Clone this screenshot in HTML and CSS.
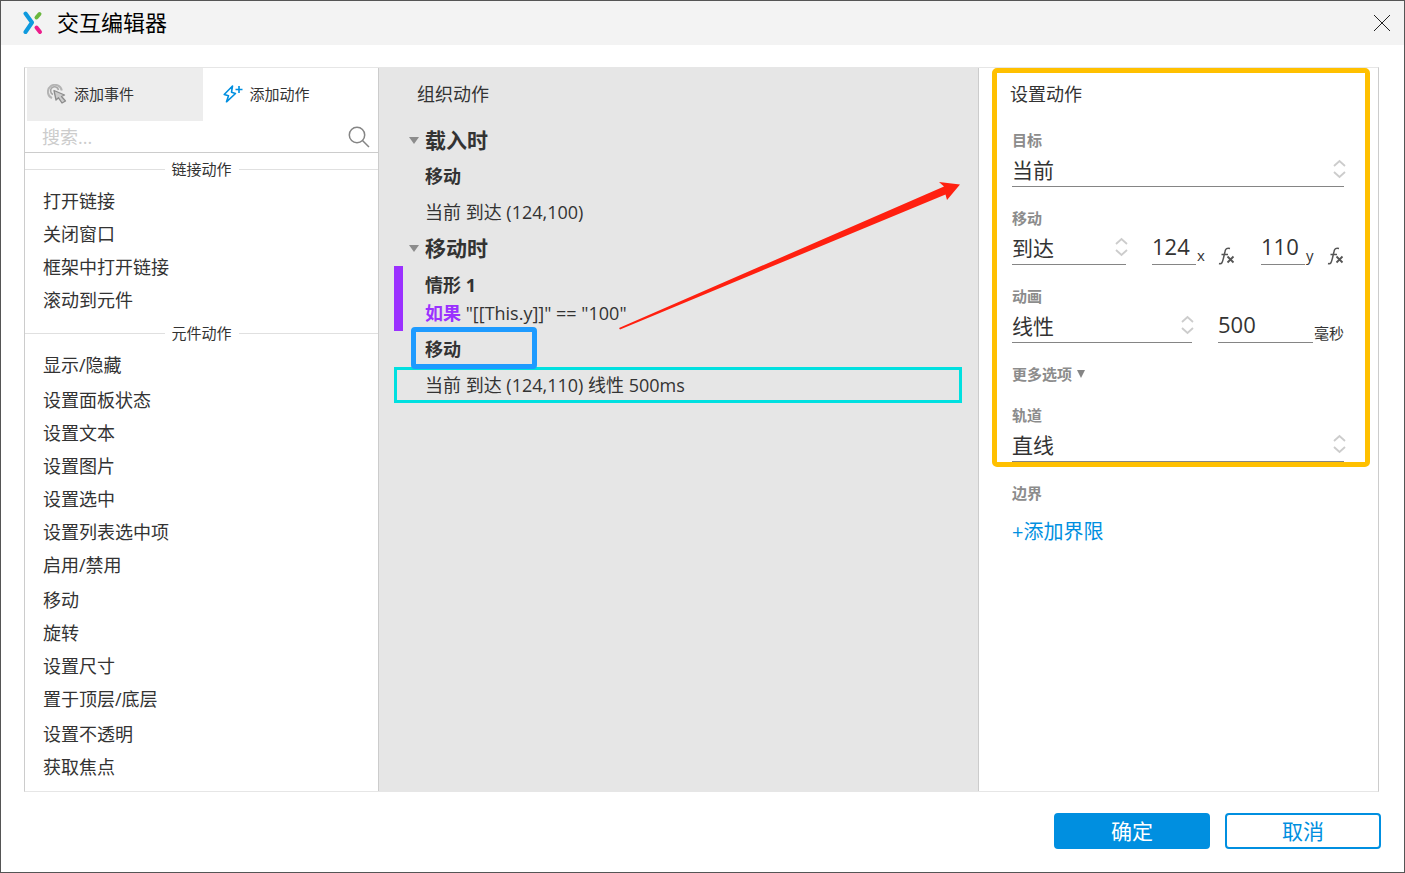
FILE: index.html
```html
<!DOCTYPE html>
<html lang="zh-CN">
<head>
<meta charset="utf-8">
<title>交互编辑器</title>
<link rel="stylesheet" href="styles.css">
</head>
<body>
<div class="window">
  <header class="titlebar">
    <svg class="logo" width="20" height="24" viewBox="0 0 20 24" fill="none" stroke-width="4">
      <path d="M13.500 6.500L16.500 3" stroke="#6ab73e" stroke-linecap="round"/>
      <path d="M13.500 16.500L17 21" stroke="#ec1e8c" stroke-linecap="round"/>
      <path d="M2.500 2.500L9 11.500L2.500 21" stroke="#0f9ade" stroke-linejoin="round" stroke-linecap="round"/>
    </svg>
    <h1 class="title">交互编辑器</h1>
    <button class="close" type="button" aria-label="关闭">
      <svg width="18" height="18" viewBox="0 0 18 18" stroke="#222" stroke-width="1"><path d="M1 1L17 17M17 1L1 17"/></svg>
    </button>
  </header>

  <main class="workspace">
    <section class="panel library">
      <div class="tabs">
        <button class="tab" type="button">
          <svg width="20" height="20" viewBox="0 0 20 20" fill="none" stroke="#a6a6a6">
            <path d="M5 14.200A7 7 0 1 1 14.800 6.500" stroke="#b4b4b4" stroke-width="2"/>
            <path d="M6 10.500A4 4 0 1 1 11.500 6" stroke-width="1.600"/>
            <path d="M7 6.500L9 16L11.500 13.800L15 19L18.500 17L14.500 12.500L17.500 11Z" fill="#ccc" stroke="#8c8c8c" stroke-width="1.300" stroke-linejoin="round"/>
          </svg>
          添加事件
        </button>
        <button class="tab tab-active" type="button">
          <svg width="20" height="18" viewBox="0 0 20 18" fill="none" stroke="#008fe0" stroke-width="1.600" stroke-linejoin="round">
            <path d="M9.500 1L1.200 9.500L5.500 10.800L3.500 16.800L12.500 8.500L8.500 7.200Z"/>
            <path d="M16 1V8M12.500 4.500H19.500"/>
          </svg>
          添加动作
        </button>
      </div>
      <div class="search">
        <input class="search-input" type="text" placeholder="搜索..." aria-label="搜索">
        <svg width="22" height="22" viewBox="0 0 22 22" fill="none" stroke="#858585" stroke-width="1.500"><circle cx="9" cy="9" r="7.700"/><path d="M14.500 14.500L21 21"/></svg>
      </div>
      <div class="catalog">
        <h2 class="group">链接动作</h2>
        <ul class="items">
          <li>打开链接</li>
          <li>关闭窗口</li>
          <li>框架中打开链接</li>
          <li>滚动到元件</li>
        </ul>
        <h2 class="group">元件动作</h2>
        <ul class="items">
          <li class="mixed">显示/隐藏</li>
          <li>设置面板状态</li>
          <li>设置文本</li>
          <li>设置图片</li>
          <li>设置选中</li>
          <li>设置列表选中项</li>
          <li class="mixed">启用/禁用</li>
          <li>移动</li>
          <li>旋转</li>
          <li>设置尺寸</li>
          <li class="mixed">置于顶层/底层</li>
          <li>设置不透明</li>
          <li>获取焦点</li>
          <li class="mixed">展开/折叠树节点</li>
        </ul>
      </div>
    </section>

    <section class="panel organizer">
      <h2 class="panel-title">组织动作</h2>
      <h3 class="event">载入时</h3>
      <p class="action">移动</p>
      <p class="detail">当前 到达 (124,100)</p>
      <h3 class="event">移动时</h3>
      <div class="case">
        <p><strong>情形 1</strong></p>
        <p><strong class="keyword">如果</strong> "[[This.y]]" == "100"</p>
      </div>
      <p class="action action-marked">移动</p>
      <p class="detail detail-selected">当前 到达 (124,110) 线性 500ms</p>
      <svg class="arrow" width="344" height="152" viewBox="0 0 344 152" fill="#ff2010">
        <path d="M1 150L326 8.500L321 4L342 6.500L329 22L327.500 16.500L2 151.500Z"/>
      </svg>
    </section>

    <section class="panel settings">
      <h2 class="panel-title">设置动作</h2>
      <form class="fields">
        <div class="field">
          <label for="target">目标</label>
          <div class="row">
            <div class="picker">
              <select id="target"><option>当前</option></select>
              <svg class="chevrons" width="13" height="20" viewBox="0 0 13 20" fill="none" stroke="#ccc" stroke-width="1.800"><path d="M1 7L6.500 2L12 7M1 13L6.500 18L12 13"/></svg>
            </div>
          </div>
        </div>
        <div class="field">
          <label for="move">移动</label>
          <div class="row">
            <div class="picker">
              <select id="move"><option>到达</option></select>
              <svg class="chevrons" width="13" height="20" viewBox="0 0 13 20" fill="none" stroke="#ccc" stroke-width="1.800"><path d="M1 7L6.500 2L12 7M1 13L6.500 18L12 13"/></svg>
            </div>
            <div class="coord">
              <input class="number" id="pos-x" type="text" value="124">
              <label class="unit" for="pos-x">x</label>
              <button class="fx" type="button" aria-label="x 函数">
                <svg width="17" height="18" viewBox="0 0 17 18" fill="none" stroke="#555" stroke-width="1.500"><path d="M1 16.500C4 17.500 4.500 15 5.500 11L7 4.500C7.600 1.500 9 .8 12 1.500M3.500 7.500H10"/><path d="M9.500 9.500L15.500 15.500M15.500 9.500L9.500 15.500" stroke-width="1.800"/></svg>
              </button>
            </div>
            <div class="coord">
              <input class="number" id="pos-y" type="text" value="110">
              <label class="unit" for="pos-y">y</label>
              <button class="fx" type="button" aria-label="y 函数">
                <svg width="17" height="18" viewBox="0 0 17 18" fill="none" stroke="#555" stroke-width="1.500"><path d="M1 16.500C4 17.500 4.500 15 5.500 11L7 4.500C7.600 1.500 9 .8 12 1.500M3.500 7.500H10"/><path d="M9.500 9.500L15.500 15.500M15.500 9.500L9.500 15.500" stroke-width="1.800"/></svg>
              </button>
            </div>
          </div>
        </div>
        <div class="field">
          <label for="easing">动画</label>
          <div class="row">
            <div class="picker">
              <select id="easing"><option>线性</option></select>
              <svg class="chevrons" width="13" height="20" viewBox="0 0 13 20" fill="none" stroke="#ccc" stroke-width="1.800"><path d="M1 7L6.500 2L12 7M1 13L6.500 18L12 13"/></svg>
            </div>
            <div class="coord">
              <input class="number number-wide" id="duration" type="text" value="500">
              <label class="unit" for="duration">毫秒</label>
            </div>
          </div>
        </div>
        <button class="more" type="button">更多选项
          <svg width="8" height="8" viewBox="0 0 8 8" fill="#858585"><path d="M0 0H8L4 8Z"/></svg>
        </button>
        <div class="field">
          <label for="path">轨道</label>
          <div class="row">
            <div class="picker">
              <select id="path"><option>直线</option></select>
              <svg class="chevrons" width="13" height="20" viewBox="0 0 13 20" fill="none" stroke="#ccc" stroke-width="1.800"><path d="M1 7L6.500 2L12 7M1 13L6.500 18L12 13"/></svg>
            </div>
          </div>
        </div>
        <div class="field">
          <h3 class="field-name">边界</h3>
          <button class="add" type="button">+添加界限</button>
        </div>
      </form>
      <div class="highlight"></div>
    </section>
  </main>

  <footer class="footer">
    <button class="btn btn-primary" type="button">确定</button>
    <button class="btn" type="button">取消</button>
  </footer>
</div>
</body>
</html>
```
FILE: styles.css
```css
*, *::before, *::after { box-sizing: border-box; }
body {
  margin: 0;
  font-family: "Open Sans", "Noto Sans CJK SC", sans-serif;
  font-size: 18px;
  color: #333;
}
h1, h2, h3, p, ul { margin: 0; padding: 0; font-weight: 400; font-size: inherit; }
ul { list-style: none; }
button, input, select { font: inherit; color: inherit; margin: 0; padding: 0; border: 0; background: none; border-radius: 0; }
svg { flex: none; display: block; }

.window {
  display: flex;
  flex-direction: column;
  height: 100vh;
  border: 1px solid #555;
  background: #fff;
}
.titlebar {
  display: flex;
  align-items: center;
  flex: none;
  height: 44px;
  padding: 0 13px 0 22px;
  background: #f3f3f3;
}
.title { flex: 1; margin-left: 14px; padding-bottom: 3px; font-size: 22px; line-height: 32px; color: #000; }
.close { display: flex; }

.workspace {
  display: grid;
  grid-template-columns: 354fr 600fr 399fr;
  flex: 1;
  min-height: 0;
  margin: 22px 25px 0 23px;
  border: 1px solid #e6e6e6;
  border-left-color: #ccc;
  border-right-color: #ccc;
}
.panel { position: relative; min-width: 0; min-height: 0; }
.panel-title { height: 53px; line-height: 53px; }

.library { display: flex; flex-direction: column; border-right: 1px solid #ccc; }
.tabs { display: grid; grid-template-columns: 1fr 1fr; flex: none; height: 53px; padding-left: 2px; }
.tab { display: flex; align-items: center; gap: 7px; padding: 0 0 2px 20px; background: #ededed; font-size: 15px; }
.tab-active { background: #fff; }
.search { display: flex; align-items: center; flex: none; height: 32px; padding: 0 8px 0 17px; border-bottom: 1px solid #ccc; }
.search-input { flex: 1; min-width: 0; height: 30px; outline: 0; }
.search-input::placeholder { color: #ccc; opacity: 1; }
.catalog { flex: 1; min-height: 0; overflow: hidden; }
.group { display: flex; align-items: center; gap: 7px; font-size: 15px; line-height: 32px; }
.group::before, .group::after { content: ""; flex: 1; height: 1px; background: #e0e0e0; }
.items { padding-left: 18px; line-height: 33px; }
.mixed { padding-bottom: 2px; }

.organizer { padding: 0 16px 0 15px; background: #e6e6e6; border-right: 1px solid #ccc; }
.organizer .panel-title { height: 54px; padding-left: 23px; }
.event { display: flex; align-items: center; gap: 6px; padding-left: 15px; font-size: 21px; font-weight: 700; line-height: 36px; }
.event::before { content: ""; border: 5px solid transparent; border-top: 7px solid #8c8c8c; border-bottom: 0; }
.action, .detail { padding-left: 31px; line-height: 36px; }
.action { font-weight: 700; }
.case { padding: 5px 0 4px 22px; border-left: 9px solid #9b30ff; line-height: 28px; }
.case strong { font-weight: 700; }
.keyword { color: #9b30ff; }
.action-marked { position: relative; }
.action-marked::after {
  content: "";
  position: absolute;
  top: -4px;
  left: 17px;
  width: 126px;
  height: 42px;
  border: 5px solid #1e9bff;
  border-radius: 4px;
}
.detail-selected { padding-left: 28px; border: 3px solid #00e0e0; line-height: 30px; }
.arrow { position: absolute; top: 110px; right: 16px; }

.settings .panel-title { padding-left: 31px; }
.fields { display: flex; flex-direction: column; align-items: stretch; gap: 21px; padding: 9px 34px 0 33px; }
.field label, .field-name, .more { font-size: 15px; font-weight: 700; line-height: 20px; color: #8c8c8c; }
.field > label { display: block; }
.row { display: flex; align-items: flex-end; gap: 26px; }
.picker { position: relative; flex: 1; min-width: 0; }
.picker select {
  display: block;
  width: 100%;
  height: 37px;
  padding-top: 4px;
  appearance: none;
  border-bottom: 1px solid #858585;
  font-size: 21px;
  line-height: 30px;
}
.chevrons { position: absolute; top: 9px; right: -2px; pointer-events: none; }
.coord { display: flex; align-items: flex-end; }
.number { width: 44px; height: 37px; border-bottom: 1px solid #858585; font-size: 22px; }
.number-wide { width: 95px; }
.field .unit { min-width: 22px; padding-left: 1px; font-weight: 400; color: #333; }
.fx { display: flex; }
.more { display: flex; align-items: center; gap: 5px; }
.add { display: block; margin-top: 14px; font-size: 20px; line-height: 30px; color: #008fe0; }
.highlight {
  position: absolute;
  top: 0;
  left: 13px;
  right: 8px;
  height: 399px;
  border: 5px solid #ffc000;
  border-radius: 5px;
  pointer-events: none;
}

.footer { display: flex; justify-content: flex-end; gap: 15px; flex: none; padding: 21px 23px 23px; }
.btn { width: 156px; height: 36px; border: 2px solid #008fe0; border-radius: 4px; font-size: 21px; line-height: 30px; color: #008fe0; }
.btn-primary { background: #008fe0; color: #fff; }
```
